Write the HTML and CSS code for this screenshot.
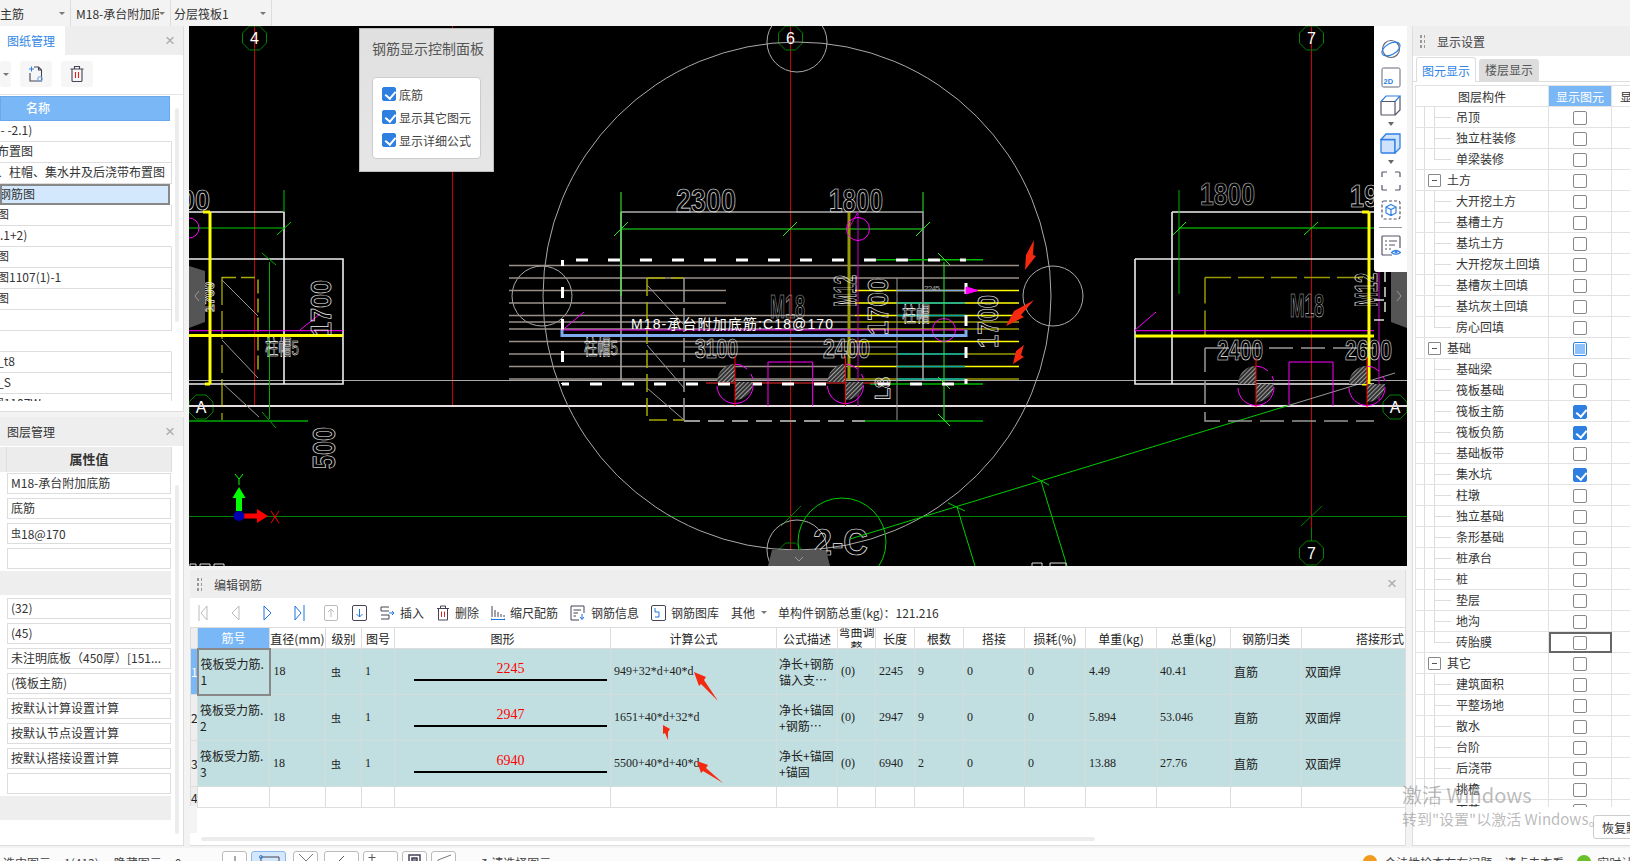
FILE: index.html
```html
<!DOCTYPE html>
<html>
  <head>
    <title>编辑钢筋</title>
    <meta charset="utf-8" />
    <link rel="stylesheet" href="styles.css">
  </head>
  <body>
    <div class="topbar">
      <div class="top-item item-a"><span class="top-text shift">主筋</span><i class="caret"></i></div>
      <div class="top-item item-b"><span class="top-text">M18-承台附加底筋</span><i class="caret"></i></div>
      <div class="top-item item-c"><span class="top-text">分层筏板1</span><i class="caret"></i></div>
    </div>

    <div class="main">
      <div class="left">
        <section class="panel drawings">
          <div class="panel-head">
            <div class="head-tab">图纸管理</div>
            <span class="close">×</span>
          </div>
          <div class="drawing-tools">
            <div class="tool-btn drop"><i class="caret"></i></div>
            <div class="tool-btn">
              <svg width="18" height="18" viewBox="0 0 18 18" fill="none" stroke="#445" stroke-width="1.1"><path d="M3 8v8h11.500V5l-3-3H7"/><path d="M11.500 2v3h3"/><path d="M4.500 1.500v5M2 4h5" stroke="#2f80e4"/><circle cx="13" cy="14" r="2.200" stroke="#7aa8dc"/></svg>
            </div>
            <div class="tool-btn">
              <svg width="16" height="18" viewBox="0 0 16 18" fill="none" stroke="#445" stroke-width="1.100"><path d="M1.500 4h13M5.500 4V1.500h5V4M3 4v11.500q0 1 1 1h8q1 0 1-1V4"/><path d="M6.500 7v6M9.500 7v6" stroke="#e02020"/></svg>
            </div>
          </div>
          <div class="sheet">
            <div class="sheet-head"><span>名称</span></div>
            <div class="sheet-row group"><span>基础层(-4.5 - -2.1)</span></div>
            <div class="sheet-row"><span>桩基础平面布置图</span></div>
            <div class="sheet-row"><span>承台、地梁、柱帽、集水井及后浇带布置图</span></div>
            <div class="sheet-row picked"><span>基础底板配钢筋图</span></div>
            <div class="sheet-row"><span>地下室墙柱图</span></div>
            <div class="sheet-row group"><span>一层结构(-2.1+2)</span></div>
            <div class="sheet-row"><span>地下室墙柱图</span></div>
            <div class="sheet-row"><span>集水坑地沟图1107(1)-1</span></div>
            <div class="sheet-row"><span>地下室墙柱图</span></div>
            <div class="sheet-row"><span></span></div>
            <div class="sheet-row group"><span></span></div>
            <div class="sheet-row"><span>基础图纸改_t8</span></div>
            <div class="sheet-row"><span>基础图纸改_S</span></div>
            <div class="sheet-row"><span>基础结构1图1107W</span></div>
            <div class="scroll-v"></div>
          </div>
        </section>

        <section class="panel props">
          <div class="panel-head">
            <div class="head-title">图层管理</div>
            <span class="close">×</span>
          </div>
          <div class="prop-head"><span></span><b>属性值</b></div>
          <div class="prop-list">
            <div class="prop">M18-承台附加底筋</div>
            <div class="prop">底筋</div>
            <div class="prop"><span class="rebar">虫</span>18@170</div>
            <div class="prop"></div>
            <div class="prop-band"></div>
            <div class="prop">(32)</div>
            <div class="prop">(45)</div>
            <div class="prop">未注明底板（450厚）[151...</div>
            <div class="prop">(筏板主筋)</div>
            <div class="prop">按默认计算设置计算</div>
            <div class="prop">按默认节点设置计算</div>
            <div class="prop">按默认搭接设置计算</div>
            <div class="prop"></div>
            <div class="prop-band"></div>
          </div>
          <div class="scroll-v"></div>
        </section>
      </div>

      <div class="center">
        <div class="canvas">
          <svg class="cad" width="1218" height="540" viewBox="189 26 1218 540">
            <defs>
              <pattern id="hatch" width="3" height="3" patternUnits="userSpaceOnUse" patternTransform="rotate(45)">
                <rect width="3" height="3" fill="#333"/>
                <line x1="0" y1="0" x2="0" y2="3" stroke="#ccc" stroke-width="1.400"/>
              </pattern>
              <g id="pile">
                <path d="M0,0L-18,0A18,18 0 0 1 0,-18Z M0,0L18,0A18,18 0 0 1 0,18Z" fill="url(#hatch)"/>
                <path d="M0,-18A18,18 0 0 1 12,-13M-18,4A18,18 0 0 0 18,3M16,-8L18,-3" fill="none" stroke="#f0f"/>
                <line x1="0" y1="-26" x2="0" y2="24" stroke="#f00"/>
              </g>
              <polygon id="octa" points="5,-12 12,-5 12,5 5,12 -5,12 -12,5 -12,-5 -5,-12" fill="none" stroke="#008000"/>
            </defs>

            <!-- axes -->
            <g stroke="#c80000" fill="none">
              <line x1="254.500" y1="26" x2="254.500" y2="405"/>
              <line x1="452.500" y1="26" x2="452.500" y2="405"/>
              <line x1="790.500" y1="26" x2="790.500" y2="550"/>
              <line x1="1311.500" y1="26" x2="1311.500" y2="528"/>
            </g>
            <line x1="1311.500" y1="528" x2="1311.500" y2="541" stroke="#008000"/>
            <use href="#octa" x="254.500" y="38"/>
            <use href="#octa" x="790.500" y="38"/>
            <use href="#octa" x="1311.500" y="38"/>
            <use href="#octa" x="1311.500" y="553"/>
            <use href="#octa" x="201" y="407"/>
            <use href="#octa" x="1395" y="407"/>
            <use href="#octa" x="790.500" y="555"/>
            <g class="label" font-size="16" text-anchor="middle">
              <text x="254.500" y="44">4</text>
              <text x="790.500" y="44">6</text>
              <text x="1311.500" y="44">7</text>
              <text x="1311.500" y="559">7</text>
              <text x="201" y="413">A</text>
              <text x="1395" y="413">A</text>
            </g>

            <!-- long horizontals -->
            <line x1="189" y1="380.500" x2="1407" y2="380.500" stroke="#aaa"/>
            <line x1="189" y1="406" x2="1407" y2="406" stroke="#e6dede" stroke-width="2"/>
            <line x1="189" y1="516.500" x2="1407" y2="516.500" stroke="#008000"/>
            <line x1="781" y1="526" x2="801" y2="506" stroke="#008000"/>
            <line x1="1301" y1="526" x2="1322" y2="506" stroke="#008000"/>

            <!-- big circle and bubbles -->
            <g fill="none" stroke="#aaa">
              <circle cx="797" cy="296" r="254"/>
              <circle cx="542" cy="296" r="30"/>
              <circle cx="1053" cy="296" r="30"/>
              <circle cx="797" cy="42" r="30"/>
              <circle cx="797" cy="550" r="30"/>
            </g>
            <circle cx="842" cy="542" r="44" fill="none" stroke="#0c0"/>
            <text class="hollow" x="813" y="555" font-size="36" textLength="55" lengthAdjust="spacingAndGlyphs">2-C</text>

            <!-- slanted green -->
            <g stroke="#0c0" fill="none">
              <line x1="850" y1="539" x2="1290" y2="405"/>
              <line x1="948" y1="503" x2="965" y2="511"/>
              <line x1="1032" y1="476" x2="1049" y2="485"/>
              <line x1="957" y1="507" x2="975" y2="566"/>
              <line x1="1041" y1="481" x2="1067" y2="566"/>
            </g>
            <line x1="1290" y1="405" x2="1395" y2="373" stroke="#999"/>
            <path d="M1032 566v-3h10v3M1050 566v-3h16v3M190 566v-2h6v2M200 566v-2h10v2M214 566v-2h10v2" stroke="#ddd" fill="none"/>

            <!-- left block -->
            <g fill="none">
              <path d="M189 212H284V384M189 259H343V384H189" stroke="#eee" stroke-width="1.600"/>
              <path d="M284 190V212" stroke="#008000" stroke-width="1.500"/>
              <path d="M189 228H284M277 235L291 222" stroke="#0c0"/>
              <path d="M269.500 262V419M262 253L276 265M262 412L276 428" stroke="#0a0"/>
              <path d="M189 421H308" stroke="#008000" stroke-width="2"/>
              <path d="M222 277.500H258V370" stroke="#aa0" stroke-width="1.500" stroke-dasharray="14 5"/>
              <path d="M222 277V420" stroke="#dd0" stroke-dasharray="28 6"/>
              <path d="M222 280L258 316M222 340L258 378M221 382L259 417" stroke="#999"/>
              <path d="M189 330.700H343" stroke="#f0f"/>
              <path d="M210 212V384M203 212H210M189 335.500H343M205 384H210" stroke="#ff0" stroke-width="3"/>
              <circle cx="189" cy="228" r="10" stroke="#f0f"/>
              <path d="M300 330L320 314" stroke="#f0f"/>
            </g>
            <text class="hollow" x="180" y="210" font-size="30" textLength="30" lengthAdjust="spacingAndGlyphs">00</text>
            <text class="hollow" transform="translate(331 336) rotate(-90)" font-size="30" textLength="56" lengthAdjust="spacingAndGlyphs">1700</text>
            <text class="hollow" transform="translate(335 469) rotate(-90)" font-size="32" textLength="42" lengthAdjust="spacingAndGlyphs">500</text>
            <text class="hollow thin" x="265" y="355" font-size="20" textLength="34" lengthAdjust="spacingAndGlyphs">柱帽5</text>
            <text class="hollow" transform="translate(214 312) rotate(-90)" font-size="14" textLength="30" lengthAdjust="spacingAndGlyphs">1700</text>

            <!-- center rows -->
            <g stroke="#9a9088" stroke-width="1.500">
              <path d="M509 265.500H1019M509 278H1019M509 290.500H726M509 303H726M509 315.500H855M509 322H855M509 329H855M509 341.500H855M509 354H855M509 366.500H855M509 379H855"/>
            </g>
            <g stroke-width="1.500">
              <path d="M855 290.500H1019M855 303H1019M855 315.500H1019M855 341.500H1019M855 366.500H1019" stroke="#ff0"/>
              <path d="M855 322H1019M855 329H1019M855 354H1019M855 379H1019" stroke="#990"/>
              <path d="M897 303H965M897 315.500H965M897 354H965M897 366.500H965M897 379H965" stroke="#0aa"/>
              <path d="M897 290.500H965" stroke="#8aa8f0"/>
            </g>

            <!-- center block -->
            <g fill="none">
              <path d="M621 212H923V380M621 212V380" stroke="#aaa" stroke-width="1.500"/>
              <path d="M621 192V296" stroke="#3f3"/>
              <path d="M923 192V212M621 229H923M614 236L628 222M783 236L797 222M916 236L930 222" stroke="#2e2"/>
              <path d="M849 212V380" stroke="#990" stroke-width="3"/>
              <path d="M858 212V406M849 228L858 212" stroke="#c0c"/>
              <circle cx="858" cy="229" r="11.500" stroke="#f0f"/>
              <circle cx="944" cy="330" r="11.500" stroke="#f0f"/>
              <path d="M565 328L584 312" stroke="#f0f"/>
              <path d="M647 278H684M647 278V420H684" stroke="#aa0" stroke-dasharray="18 6" stroke-width="1.500"/>
              <path d="M684 278V420" stroke="#999" stroke-dasharray="24 6" stroke-width="1.500"/>
              <path d="M647 285L684 325M647 345L684 388M647 388L684 420" stroke="#999"/>
              <path d="M684 347H897M897 278V420" stroke="#999"/>
              <path d="M684 421H865" stroke="#999" stroke-width="2" stroke-dasharray="16 8"/>
              <path d="M865 421H983" stroke="#008000" stroke-width="2"/>
              <path d="M876 259.700H983M870 384H983" stroke="#0b0" stroke-width="1.500"/>
              <path d="M944 262V420M938 253L950 265M938 377L950 389M938 414L950 426" stroke="#2e2"/>
              <path d="M768 406V362H812.700V406" stroke="#f0f"/>
              <path d="M706 383H880" stroke="#f33"/>
              <path d="M576 260H966" stroke="#fff" stroke-width="3" stroke-dasharray="12 20"/>
              <path d="M590 384H966" stroke="#fff" stroke-width="3" stroke-dasharray="12 20"/>
              <path d="M562 384H569" stroke="#fff" stroke-width="3"/>
              <path d="M562.500 260V266M562.500 287V384M966 283V384" stroke="#fff" stroke-width="3" stroke-dasharray="11 21"/>
              <path d="M562 330H966" stroke="#f0f"/>
              <path d="M562 330V335.500H966V330" stroke="#7fa8ee" stroke-width="3"/>
              <path d="M966 287L978 290.500L966 294Z" fill="#f0f" stroke="#f0f"/>
            </g>
            <g class="hollow">
              <text x="676" y="212" font-size="33" textLength="60" lengthAdjust="spacingAndGlyphs">2300</text>
              <text x="829" y="212" font-size="33" textLength="54" lengthAdjust="spacingAndGlyphs">1800</text>
              <text x="770" y="318" font-size="34" textLength="35" lengthAdjust="spacingAndGlyphs" class="dim">M18</text>
              <text x="695" y="358" font-size="28" textLength="43" lengthAdjust="spacingAndGlyphs">3100</text>
              <text x="823" y="358" font-size="28" textLength="47" lengthAdjust="spacingAndGlyphs">2400</text>
              <text transform="translate(856 307) rotate(-90)" font-size="32" textLength="32" lengthAdjust="spacingAndGlyphs">M12</text>
              <text transform="translate(888 335) rotate(-90)" font-size="30" textLength="57" lengthAdjust="spacingAndGlyphs">1700</text>
              <text transform="translate(998 348) rotate(-90)" font-size="30" textLength="53" lengthAdjust="spacingAndGlyphs">1700</text>
              <text transform="translate(890 400) rotate(-90)" font-size="22" textLength="23" lengthAdjust="spacingAndGlyphs">L8</text>
              <text class="thin" x="584" y="355" font-size="20" textLength="34" lengthAdjust="spacingAndGlyphs">柱帽5</text>
              <text class="thin" x="902" y="322" font-size="20" textLength="28" lengthAdjust="spacingAndGlyphs">柱帽</text>
            </g>
            <text x="924" y="291" class="tiny" font-size="8" textLength="16">2245</text>
            <text x="631" y="329" class="tag" font-size="14" textLength="202" lengthAdjust="spacing">M18-承台附加底筋:C18@170</text>

            <!-- right block -->
            <g fill="none">
              <path d="M1172 212H1374M1172 212V384M1135 259H1374M1135 259V384H1374" stroke="#eee" stroke-width="1.600"/>
              <path d="M1179 190V294" stroke="#0a0"/>
              <path d="M1179 228H1374M1173 235L1186 222M1304 235L1318 222" stroke="#0e0"/>
              <path d="M1205 277.500H1374M1205 277.500V340" stroke="#990" stroke-width="1.500" stroke-dasharray="26 7"/>
              <path d="M1205 348H1374M1205 348V421H1374" stroke="#999" stroke-width="1.500" stroke-dasharray="24 8"/>
              <path d="M1135 330.700H1374M1135 330L1156 312" stroke="#f0f"/>
              <path d="M1369 212V384M1362 212H1369M1135 336H1374M1362 384H1369" stroke="#ff0" stroke-width="3"/>
              <path d="M1379 212V400" stroke="#c0c"/>
              <path d="M1289 406V362H1333V406" stroke="#f0f"/>
              <path d="M1374 300h10M1374 320h10M1385 272v40" stroke="#ddd" stroke-width="1.500" stroke-dasharray="10 5"/>
            </g>
            <g class="hollow">
              <text x="1200" y="205" font-size="31" textLength="55" lengthAdjust="spacingAndGlyphs" class="dim">1800</text>
              <text x="1350" y="207" font-size="31" textLength="28" lengthAdjust="spacingAndGlyphs">19</text>
              <text x="1290" y="317" font-size="33" textLength="34" lengthAdjust="spacingAndGlyphs" class="dim">M18</text>
              <text x="1217" y="360" font-size="30" textLength="46" lengthAdjust="spacingAndGlyphs">2400</text>
              <text x="1345" y="360" font-size="30" textLength="47" lengthAdjust="spacingAndGlyphs">2600</text>
              <text transform="translate(1377 307) rotate(-90)" font-size="32" textLength="34" lengthAdjust="spacingAndGlyphs">M12</text>
            </g>
            <use href="#pile" x="735" y="382"/>
            <use href="#pile" x="845.500" y="382"/>
            <use href="#pile" x="1256" y="384"/>
            <use href="#pile" x="1367" y="384"/>

            <!-- red markers -->
            <g fill="#f5290f">
              <polygon points="1025,270 1026,255 1034,240 1033,255 1036,256"/>
              <polygon points="1006,326 1014,311 1034,300 1021,315 1024,317"/>
              <polygon points="1013,364 1016,351 1024,345 1021,355 1024,357"/>
            </g>

            <!-- coordinate gizmo -->
            <path d="M236 511V498H232.500L239 487L245.500 498H242V511Z" fill="#0f0"/>
            <path d="M242 513.500H257V509L268 516L257 523V518.500H242Z" fill="#f00"/>
            <ellipse cx="239" cy="516" rx="5.500" ry="5" fill="#0000b0"/>
            <path d="M235 474L239 479L243 474M239 479V485" stroke="#0f0" fill="none"/>
            <path d="M271 511L279 523M279 511L271 523" stroke="#f00" fill="none"/>

            <!-- edge handles -->
            <g fill="#555">
              <path d="M189 266L205 271V322L189 328Z"/>
              <path d="M1407 266L1391 271V322L1407 328Z"/>
              <path d="M768 566L772 550H826L830 566Z"/>
            </g>
            <g fill="none" stroke="#999">
              <path d="M199 291L195 296L199 301"/>
              <path d="M1397 291L1401 296L1397 301"/>
              <path d="M795 557L799 561L803 557"/>
            </g>
          </svg>

          <div class="rebar-control">
            <div class="control-title">钢筋显示控制面板</div>
            <div class="control-box">
              <label class="control-row"><span class="cb on big"></span>底筋</label>
              <label class="control-row"><span class="cb on big"></span>显示其它图元</label>
              <label class="control-row"><span class="cb on big"></span>显示详细公式</label>
            </div>
          </div>

          <div class="view-tools">
            <svg width="22" height="22" viewBox="0 0 22 22" fill="none" stroke-width="1.200"><circle cx="11" cy="11" r="8.500" stroke="#667"/><ellipse cx="11" cy="11" rx="10" ry="5.500" transform="rotate(-30 11 11)" stroke="#2f80e4"/></svg>
            <svg class="tool-up" width="20" height="21" viewBox="0 0 20 21" fill="none"><rect x="1" y="1" width="18" height="19" rx="1.500" stroke="#667"/><text x="2.500" y="17" class="icon-2d">2D</text></svg>
            <svg class="tool-up" width="21" height="21" viewBox="0 0 21 21" fill="none" stroke="#556" stroke-width="1.200"><path d="M1 6.500V19a1 1 0 0 0 1 1h13V6.500zM15 20l5-5V1"/><path d="M1 6.500L6 1h14l-5 5.500" stroke="#2f80e4"/></svg>
            <i class="mini-caret"></i>
            <svg class="tool-down" width="21" height="21" viewBox="0 0 21 21" stroke="#2f80e4" stroke-width="1.300"><path d="M1 6.500V19a1 1 0 0 0 1 1h13V6.500z" fill="#cfe2fb"/><path d="M1 6.500L6 1h14v14l-5 5V6.500z" fill="#cfe2fb"/></svg>
            <i class="mini-caret"></i>
            <svg class="tool-down" width="20" height="20" viewBox="0 0 20 20" fill="none" stroke="#556" stroke-width="1.200"><path d="M1 6V2q0-1 1-1h4M14 1h4q1 0 1 1v4M19 14v4q0 1-1 1h-4M6 19H2q-1 0-1-1v-4"/></svg>
            <svg width="20" height="20" viewBox="0 0 20 20" fill="none" stroke-width="1.200"><rect x="1" y="1" width="18" height="18" rx="2" stroke="#556" stroke-dasharray="3 2"/><path d="M10 4.500L15 7v6l-5 2.500L5 13V7zM5 7l5 2.500L15 7M10 9.500V15.500" stroke="#2f80e4"/></svg>
            <hr class="tool-rule" />
            <svg width="20" height="21" viewBox="0 0 20 21" fill="none" stroke="#556" stroke-width="1.200"><path d="M11 20H2q-1 0-1-1V2q0-1 1-1h16q1 0 1 1v11"/><path d="M4 6h2M8 6h8M4 10h2M8 10h6M4 14h2M8 14h2"/><path d="M10.500 17.500q4-4 9 0q-5 3.500-9 0z" stroke="#2f80e4"/><circle cx="15" cy="17.300" r="1.300" fill="#2f80e4" stroke="none"/></svg>
          </div>
        </div>

        <section class="editor">
          <div class="panel-head editor-head">
            <i class="grip"></i>
            <div class="editor-title">编辑钢筋</div>
            <span class="close">×</span>
          </div>
          <div class="editor-tools">
            <svg class="nav n1" width="10" height="18" viewBox="0 0 10 18" fill="none" stroke="#bbb"><path d="M1 1V17M9 2L3 9L9 16Z"/></svg>
            <svg class="nav n2" width="9" height="18" viewBox="0 0 9 18" fill="none" stroke="#bbb"><path d="M8 2L1 9L8 16Z"/></svg>
            <svg class="nav n3" width="9" height="18" viewBox="0 0 9 18" fill="none" stroke="#1f74e0"><path d="M1 2L8 9L1 16Z"/></svg>
            <svg class="nav n4" width="11" height="18" viewBox="0 0 11 18" fill="none" stroke="#1f74e0"><path d="M1 2L7 9L1 16ZM10 1V17"/></svg>
            <svg class="nav n5" width="14" height="16" viewBox="0 0 14 16" fill="none" stroke="#bbb"><rect x=".5" y=".5" width="13" height="15" rx="1.500"/><path d="M7 12V4M4 7L7 4L10 7"/></svg>
            <svg class="nav n6" width="15" height="16" viewBox="0 0 15 16" fill="none" stroke="#1f74e0"><rect x=".5" y=".5" width="14" height="15" rx="1.500" stroke="#445"/><path d="M7.500 4V12M4.500 9L7.500 12L10.500 9"/></svg>
            <span class="act a1"><svg width="15" height="14" viewBox="0 0 15 14" fill="none" stroke="#445"><path d="M9 1H1V5H9M1 9H9V13H1"/><path d="M9 7H14M12 5L14 7L12 9" stroke="#1f74e0"/></svg>插入</span>
            <span class="act"><svg width="14" height="16" viewBox="0 0 14 16" fill="none" stroke="#445"><path d="M1 3.500H13M4.500 3.500V1H9.500V3.500M2.500 3.500V15H11.500V3.500"/><path d="M5.500 6.500V12M8.500 6.500V12" stroke="#e02020"/></svg>删除</span>
            <span class="act"><svg width="14" height="16" viewBox="0 0 14 16" fill="none" stroke="#445"><path d="M1 1V12M4 5V12M7 7V12M10 9V12M13 10V12"/><path d="M0 14.500H14M0 13V15.500M14 13V15.500" stroke="#1f74e0"/></svg>缩尺配筋</span>
            <span class="act"><svg width="16" height="16" viewBox="0 0 16 16" fill="none" stroke="#445"><path d="M9 15H1V1H14V8"/><path d="M3.500 5H11M3.500 8H8M3.500 11H6"/><path d="M12 9V14M10 12L12 14.500L14 12" stroke="#1f74e0"/></svg>钢筋信息</span>
            <span class="act"><svg width="15" height="16" viewBox="0 0 15 16" fill="none" stroke="#445"><rect x=".5" y=".5" width="14" height="15" rx="1.500"/><path d="M4 3V7H8V12H4" stroke="#1f74e0"/></svg>钢筋图库</span>
            <span class="act other">其他<i class="caret"></i></span>
            <span class="total">单构件钢筋总重(kg)：121.216</span>
          </div>

          <table class="rebars">
            <colgroup>
              <col class="c0"><col class="c1"><col class="c2"><col class="c3"><col class="c4"><col class="c5"><col class="c6"><col class="c7"><col class="c8"><col class="c9"><col class="c10"><col class="c11"><col class="c12"><col class="c13"><col class="c14"><col class="c15"><col class="c16">
            </colgroup>
            <thead>
              <tr>
                <th class="num"></th><th class="active">筋号</th><th>直径(mm)</th><th>级别</th><th>图号</th><th>图形</th><th>计算公式</th><th>公式描述</th><th class="bend"><div class="clip-head"><span>弯曲调整</span></div></th><th>长度</th><th>根数</th><th>搭接</th><th>损耗(%)</th><th>单重(kg)</th><th>总重(kg)</th><th>钢筋归类</th><th class="to-right">搭接形式</th>
              </tr>
            </thead>
            <tbody>
              <tr class="filled">
                <td class="num now">1</td><td class="name sel">筏板受力筋.<br>1</td><td class="fig">18</td><td class="fig sym">虫</td><td class="fig">1</td>
                <td class="shape"><b>2245</b><i></i></td><td class="fig">949+32*d+40*d</td><td class="name">净长+钢筋<br>锚入支…</td><td class="fig">(0)</td><td class="fig">2245</td><td class="fig">9</td><td class="fig">0</td><td class="fig">0</td><td class="fig">4.49</td><td class="fig">40.41</td><td>直筋</td><td>双面焊</td>
              </tr>
              <tr class="filled">
                <td class="num">2</td><td class="name">筏板受力筋.<br>2</td><td class="fig">18</td><td class="fig sym">虫</td><td class="fig">1</td>
                <td class="shape"><b>2947</b><i></i></td><td class="fig">1651+40*d+32*d</td><td class="name">净长+锚固<br>+钢筋…</td><td class="fig">(0)</td><td class="fig">2947</td><td class="fig">9</td><td class="fig">0</td><td class="fig">0</td><td class="fig">5.894</td><td class="fig">53.046</td><td>直筋</td><td>双面焊</td>
              </tr>
              <tr class="filled">
                <td class="num">3</td><td class="name">筏板受力筋.<br>3</td><td class="fig">18</td><td class="fig sym">虫</td><td class="fig">1</td>
                <td class="shape"><b>6940</b><i></i></td><td class="fig">5500+40*d+40*d</td><td class="name">净长+锚固<br>+锚固</td><td class="fig">(0)</td><td class="fig">6940</td><td class="fig">2</td><td class="fig">0</td><td class="fig">0</td><td class="fig">13.88</td><td class="fig">27.76</td><td>直筋</td><td>双面焊</td>
              </tr>
              <tr class="empty">
                <td class="num">4</td><td></td><td></td><td></td><td></td><td></td><td></td><td></td><td></td><td></td><td></td><td></td><td></td><td></td><td></td><td></td><td></td>
              </tr>
            </tbody>
          </table>
          <div class="editor-gutter"></div>
          <div class="scroll-h"></div>
        </section>
      </div>

      <section class="right">
        <div class="panel-head right-head">
          <i class="grip"></i>
          <div class="editor-title">显示设置</div>
        </div>
        <div class="right-tabs">
          <div class="r-tab on">图元显示</div>
          <div class="r-tab">楼层显示</div>
        </div>
        <div class="layers-wrap">
          <table class="layers">
            <colgroup><col class="l1"><col class="l2"><col class="l3"></colgroup>
            <thead><tr><th>图层构件</th><th class="active">显示图元</th><th class="l-next">显示名称</th></tr></thead>
            <tbody>
              <tr><td class="leaf">吊顶</td><td><span class="cb"></span></td><td></td></tr>
              <tr><td class="leaf">独立柱装修</td><td><span class="cb"></span></td><td></td></tr>
              <tr><td class="leaf end">单梁装修</td><td><span class="cb"></span></td><td></td></tr>
              <tr><td class="branch"><i class="fold"></i>土方</td><td><span class="cb"></span></td><td></td></tr>
              <tr><td class="leaf">大开挖土方</td><td><span class="cb"></span></td><td></td></tr>
              <tr><td class="leaf">基槽土方</td><td><span class="cb"></span></td><td></td></tr>
              <tr><td class="leaf">基坑土方</td><td><span class="cb"></span></td><td></td></tr>
              <tr><td class="leaf">大开挖灰土回填</td><td><span class="cb"></span></td><td></td></tr>
              <tr><td class="leaf">基槽灰土回填</td><td><span class="cb"></span></td><td></td></tr>
              <tr><td class="leaf">基坑灰土回填</td><td><span class="cb"></span></td><td></td></tr>
              <tr><td class="leaf end">房心回填</td><td><span class="cb"></span></td><td></td></tr>
              <tr><td class="branch"><i class="fold"></i>基础</td><td><span class="cb part"></span></td><td></td></tr>
              <tr><td class="leaf">基础梁</td><td><span class="cb"></span></td><td></td></tr>
              <tr><td class="leaf">筏板基础</td><td><span class="cb"></span></td><td></td></tr>
              <tr><td class="leaf">筏板主筋</td><td><span class="cb on"></span></td><td></td></tr>
              <tr><td class="leaf">筏板负筋</td><td><span class="cb on"></span></td><td></td></tr>
              <tr><td class="leaf">基础板带</td><td><span class="cb"></span></td><td></td></tr>
              <tr><td class="leaf">集水坑</td><td><span class="cb on"></span></td><td></td></tr>
              <tr><td class="leaf">柱墩</td><td><span class="cb"></span></td><td></td></tr>
              <tr><td class="leaf">独立基础</td><td><span class="cb"></span></td><td></td></tr>
              <tr><td class="leaf">条形基础</td><td><span class="cb"></span></td><td></td></tr>
              <tr><td class="leaf">桩承台</td><td><span class="cb"></span></td><td></td></tr>
              <tr><td class="leaf">桩</td><td><span class="cb"></span></td><td></td></tr>
              <tr><td class="leaf">垫层</td><td><span class="cb"></span></td><td></td></tr>
              <tr><td class="leaf">地沟</td><td><span class="cb"></span></td><td></td></tr>
              <tr><td class="leaf end">砖胎膜</td><td class="focus"><span class="cb"></span></td><td></td></tr>
              <tr><td class="branch"><i class="fold"></i>其它</td><td><span class="cb"></span></td><td></td></tr>
              <tr><td class="leaf">建筑面积</td><td><span class="cb"></span></td><td></td></tr>
              <tr><td class="leaf">平整场地</td><td><span class="cb"></span></td><td></td></tr>
              <tr><td class="leaf">散水</td><td><span class="cb"></span></td><td></td></tr>
              <tr><td class="leaf">台阶</td><td><span class="cb"></span></td><td></td></tr>
              <tr><td class="leaf">后浇带</td><td><span class="cb"></span></td><td></td></tr>
              <tr><td class="leaf">挑檐</td><td><span class="cb"></span></td><td></td></tr>
              <tr><td class="leaf">雨蓬</td><td><span class="cb"></span></td><td></td></tr>
            </tbody>
          </table>
        </div>
        <div class="right-foot"><button class="reset">恢复默认设置</button></div>
      </section>
    </div>

    <div class="statusbar">
      <span class="st-text st-a">选中图元</span>
      <span class="st-text st-n">1(413)</span>
      <span class="st-text st-b">隐藏图元</span>
      <span class="st-text st-n">0</span>
      <span class="st-btns">
        <i class="st-btn w1"><svg width="22" height="10" viewBox="0 0 22 10" fill="none" stroke="#555"><path d="M11 3V10"/></svg></i>
        <i class="st-btn w2 on"><svg width="32" height="10" viewBox="0 0 32 10" fill="none" stroke="#445"><path d="M8 4H26V10M8 4V10"/><circle cx="8" cy="4" r="1.500" stroke="#2f80e4"/></svg></i>
        <i class="st-btn w1 gap-b"><svg width="22" height="10" viewBox="0 0 22 10" fill="none" stroke="#777"><path d="M4 1L11 8L18 1M8 10L11 8L14 10"/></svg></i>
        <i class="st-btn w2 gap-c"><svg width="32" height="10" viewBox="0 0 32 10" fill="none" stroke="#555"><path d="M12 9L18 3"/></svg></i>
        <i class="st-btn w2"><svg width="32" height="10" viewBox="0 0 32 10" fill="none" stroke="#555"><path d="M7 1V8M3.500 4.500H10.500"/></svg></i>
        <i class="st-btn w1"><svg width="22" height="10" viewBox="0 0 22 10" fill="none" stroke="#445" stroke-width="1.500"><rect x="5" y="2" width="11" height="12"/><rect x="8" y="5" width="5" height="5" fill="#889"/></svg></i>
        <i class="st-btn w1"><svg width="22" height="10" viewBox="0 0 22 10" fill="none" stroke="#777"><path d="M5 10V7L18 2"/></svg></i>
      </span>
      <span class="st-text st-c">↗ 请选择图元</span>
      <i class="dot orange"></i>
      <span class="st-text st-d">合法性检查存在问题，请点击查看</span>
      <i class="dot green"></i>
      <span class="st-text st-e">实时计算</span>
    </div>

    <!-- annotations drawn over the grid -->
    <svg class="arrows" width="1630" height="861" viewBox="0 0 1630 861" fill="#f5290f">
      <polygon points="694,672 706,677 704,680 718,701 701,684 699,686"/>
      <polygon points="663,725 670,729 668,732 668,740 665,733 663,734"/>
      <polygon points="697,761 708,765 706,768 723,783 703,771 701,773"/>
    </svg>

    <div class="watermark">
      <div class="wm-big">激活 Windows</div>
      <div class="wm-small">转到"设置"以激活 Windows。</div>
    </div>
  </body>
</html>
```

FILE: styles.css
```css
* {
  box-sizing: border-box;
}

html,
body {
  margin: 0;
  height: 861px;
  overflow: hidden;
}

body {
  position: relative;
  width: 1630px;
  background: #f3f3f3;
  font-family: "Noto Sans CJK SC", "Liberation Sans", sans-serif;
  font-size: 12px;
  color: #333;
}

i {
  font-style: normal;
}

.caret {
  display: inline-block;
  width: 0;
  height: 0;
  border: 3px solid transparent;
  border-top: 3px solid #777;
  border-bottom: 0;
}

/* top bar */
.topbar {
  display: flex;
  height: 26px;
  background: #f3f3f3;
}

.top-item {
  display: flex;
  align-items: center;
  justify-content: space-between;
  padding: 0 5px;
  border-right: 1px solid #ddd;
  overflow: hidden;
}

.top-text {
  white-space: nowrap;
  overflow: hidden;
  flex: 1;
}

.shift {
  margin-left: -5px;
}

.item-a {
  width: 71px;
}

.item-b {
  width: 100px;
}

.item-c {
  width: 101px;
  padding-left: 3px;
}

/* columns */
.main {
  display: flex;
  height: 822px;
}

.left {
  width: 184px;
  display: flex;
  flex-direction: column;
  gap: 5px;
}

.panel {
  position: relative;
  background: #fff;
  border-right: 1px solid #ddd;
  border-bottom: 1px solid #ddd;
}

.drawings {
  height: 386px;
  overflow: hidden;
}

.props {
  height: 429px;
}

.panel-head {
  position: relative;
  display: flex;
  align-items: center;
  height: 29px;
  background: #eeeeef;
}

.head-tab {
  width: 65px;
  height: 100%;
  padding-left: 7px;
  line-height: 29px;
  background: #fff;
  color: #2f86e6;
}

.head-title {
  padding-left: 7px;
}

.close {
  position: absolute;
  right: 8px;
  top: 50%;
  transform: translateY(-50%);
  font-family: "Liberation Sans", sans-serif;
  font-size: 17px;
  color: #aaa;
}

.drawing-tools {
  display: flex;
  gap: 9px;
  height: 40px;
  padding: 6px 0 0 0;
  border-bottom: 1px solid #e5e5e5;
}

.tool-btn {
  display: flex;
  align-items: center;
  justify-content: center;
  width: 32px;
  height: 26px;
  background: #f6f6f6;
  border-radius: 3px;
}

.tool-btn.drop {
  width: 11px;
}

.sheet {
  position: relative;
  height: 306px;
  overflow: hidden;
}

.sheet-head {
  width: 170px;
  height: 25px;
  margin-top: 1px;
  background: #7ab7f7;
  border: 1px solid #69a8ea;
  color: #fff;
  font-weight: 500;
  line-height: 22px;
}

.sheet-head span {
  margin-left: 25px;
}

.sheet-row {
  width: 172px;
  height: 21px;
  line-height: 18px;
  border-bottom: 1px solid #ddd;
  border-right: 1px solid #ddd;
  white-space: nowrap;
  overflow: hidden;
  position: relative;
}

.sheet-row.group {
  border-right-color: #fff;
}

.sheet-row span {
  margin-left: -63px;
}

.sheet-row.picked {
  width: 170px;
  background: #d4e8fd;
  border: 2px solid #888;
  line-height: 16px;
}

.scroll-v {
  position: absolute;
  right: 4px;
  top: 13px;
  width: 4px;
  height: 214px;
  background: #ececec;
  border-radius: 2px;
}

.props .scroll-v {
  top: 68px;
  height: 349px;
}

.prop-head {
  display: flex;
  height: 25px;
  margin-top: 1px;
  font-size: 13px;
}

.prop-head span {
  width: 7px;
  background: #ececec;
  border-right: 1px solid #ddd;
}

.prop-head b {
  width: 165px;
  background: #ececec;
  text-align: center;
  line-height: 24px;
  font-weight: 600;
  border-right: 1px solid #ddd;
}

.prop-list {
  display: flex;
  flex-direction: column;
  margin-top: 1px;
  gap: 4px;
  width: 171px;
}

.prop {
  height: 21px;
  margin-left: 7px;
  padding-left: 3px;
  border: 1px solid #ddd;
  line-height: 18px;
  white-space: nowrap;
  overflow: hidden;
}

.prop-band {
  height: 24px;
  margin: -2px 0 -1px;
  background: #eeeeee;
}

.rebar {
  font-size: 10px;
  vertical-align: 2px;
}

/* canvas */
.center {
  width: 1218px;
  margin-left: 5px;
  display: flex;
  flex-direction: column;
  gap: 4px;
}

.canvas {
  position: relative;
  height: 540px;
  background: #000;
  overflow: hidden;
}

.cad {
  display: block;
}

.cad text {
  font-family: "Liberation Sans", "Noto Sans CJK SC", sans-serif;
}

.label text,
.label {
  fill: #fff;
}

.hollow,
.hollow text {
  fill: none;
  stroke: #f2f2f2;
  stroke-width: 0.7;
  font-weight: 700;
}

.hollow.thin,
.hollow .thin {
  stroke-width: 0.55;
  stroke: #fff;
  font-weight: 400;
}

.hollow .dim {
  stroke: #c0c0c0;
}

.tiny {
  fill: #aaa;
}

.tag {
  fill: #fff;
}

.rebar-control {
  position: absolute;
  left: 170px;
  top: 2px;
  width: 135px;
  height: 144px;
  padding: 0 12px;
  background: linear-gradient(#e0e0e0, #e6e6e6);
  border: 1px solid #bbb;
}

.control-title {
  height: 48px;
  padding-top: 9px;
  font-size: 14px;
  line-height: 20px;
  text-align: center;
  white-space: nowrap;
  color: #555;
}

.control-box {
  display: flex;
  flex-direction: column;
  gap: 5px;
  height: 82px;
  padding: 7px 0 0 9px;
  background: #fff;
  border: 1px solid #ccc;
  border-radius: 4px;
}

.control-row {
  display: flex;
  align-items: center;
  gap: 3px;
  height: 18px;
  color: #444;
}

.cb {
  position: relative;
  display: inline-block;
  width: 14px;
  height: 14px;
  background: #fff;
  border: 1px solid #888;
  border-radius: 2px;
  vertical-align: middle;
}

.cb.on {
  background: #2e7fe0;
  border-color: #2e7fe0;
}

.cb.on::after {
  content: "";
  position: absolute;
  left: 4px;
  top: 1px;
  width: 5px;
  height: 8px;
  border: solid #fff;
  border-width: 0 2px 2px 0;
  transform: rotate(40deg);
}

.cb.part {
  border-color: #2e7fe0;
  background: #fff;
}

.cb.part::after {
  content: "";
  position: absolute;
  inset: 1px;
  background: #8ec1fb;
}

.view-tools {
  position: absolute;
  left: 1185px;
  top: 0;
  width: 33px;
  height: 246px;
  padding-top: 12px;
  display: flex;
  flex-direction: column;
  align-items: center;
  gap: 9px;
  background: #fff;
  border-radius: 0 0 0 3px;
}

.tool-up {
  margin-top: -2px;
}

.tool-down {
  margin-top: 1px;
}

.mini-caret {
  width: 0;
  height: 0;
  margin: -3px 0 -3px;
  border: 3.500px solid transparent;
  border-top: 4px solid #666;
  border-bottom: 0;
}

.tool-rule {
  width: 23px;
  margin: -2px 0;
  border: 0;
  border-top: 1px solid #999;
}

.icon-2d {
  font-family: "Liberation Sans", sans-serif;
  font-size: 7.500px;
  font-weight: 700;
  fill: #2f80e4;
}

/* rebar editor */
.editor {
  position: relative;
  width: 1216px;
  height: 276px;
  margin-left: 1px;
  background: #fff;
  border-bottom: 1px solid #ddd;
  border-right: 1px solid #ddd;
  overflow: hidden;
}

.editor-head {
  height: 28px;
}

.right-head {
  height: 30px;
}

.grip {
  width: 6px;
  height: 15px;
  margin: 0 12px 0 6px;
  background-image: radial-gradient(#999 1px, transparent 1.200px);
  background-size: 4px 5px;
}

.editor-title {
  color: #444;
}

.editor-tools {
  display: flex;
  align-items: center;
  height: 29px;
  padding-left: 8px;
  white-space: nowrap;
}

.nav {
  flex: none;
}

.n2 {
  margin-left: 23px;
}

.n3 {
  margin-left: 23px;
}

.n4 {
  margin-left: 22px;
}

.n5 {
  margin-left: 19px;
}

.n6 {
  margin-left: 14px;
}

.act {
  display: inline-flex;
  align-items: center;
  gap: 5px;
  margin-left: 12px;
}

.act.a1 {
  margin-left: 13px;
}

.other {
  gap: 6px;
}

.total {
  margin-left: 11px;
}

.rebars {
  table-layout: fixed;
  border-collapse: collapse;
  width: 1216px;
  color: #222;
}

.c0 { width: 7px; }
.c1 { width: 72px; }
.c2 { width: 56px; }
.c3 { width: 36px; }
.c4 { width: 33px; }
.c5 { width: 216px; }
.c6 { width: 166px; }
.c7 { width: 61px; }
.c8 { width: 38px; }
.c9 { width: 39px; }
.c10 { width: 49px; }
.c11 { width: 61px; }
.c12 { width: 61px; }
.c13 { width: 71px; }
.c14 { width: 74px; }
.c15 { width: 71px; }
.c16 { width: 105px; }

.rebars th {
  height: 21px;
  padding: 0;
  font-weight: 400;
  background: #fff;
  border: 1px solid #ddd;
  border-top-width: 1px;
  white-space: nowrap;
  overflow: hidden;
}

.rebars th.num {
  background: #eee;
}

.rebars th.active {
  background: #7ab7f7;
  color: #fff;
}

.rebars th.to-right {
  text-align: right;
  padding-right: 2px;
}

.rebars th.bend {
  vertical-align: top;
}

.clip-head {
  width: 36px;
  height: 20px;
  margin: 0 auto;
  overflow: hidden;
  white-space: normal;
  line-height: 15px;
  word-break: break-all;
}

.clip-head span {
  display: block;
  margin-top: -4px;
}

.rebars td {
  padding: 0 3px;
  border: 1px solid #d5dcdc;
  overflow: hidden;
  white-space: nowrap;
}

.filled td {
  height: 46px;
  background: #c1dfe1;
}

.empty td {
  height: 21px;
  border-color: #ddd;
}

.rebars td.num {
  padding: 0;
  background: #eee;
  text-align: center;
  font-size: 12px;
  border-color: #ddd;
}

.rebars td.now {
  background: #7ab7f7;
  color: #fff;
}

.rebars td.name {
  white-space: normal;
  line-height: 16px;
  padding-top: 1px;
  padding-left: 2px;
}

.rebars td.sel {
  border: 2px solid #888;
}

.fig {
  font-family: "Liberation Serif", "Noto Sans CJK SC", serif;
}

.rebars td.sym {
  padding-left: 5px;
  font-family: "Noto Sans CJK SC", sans-serif;
  font-size: 10px;
}

.rebars td.shape {
  position: relative;
  padding: 0 0 0 19px;
  text-align: center;
}

.shape b {
  display: block;
  width: 193px;
  font-family: "Liberation Serif", serif;
  font-size: 14px;
  font-weight: 400;
  line-height: 14px;
  color: #f00;
}

.shape i {
  display: block;
  width: 193px;
  height: 2px;
  margin-top: 3px;
  background: #000;
}

.editor-gutter {
  position: absolute;
  left: 0;
  top: 236px;
  width: 7px;
  height: 27px;
  background: #f4f4f4;
}

.scroll-h {
  position: absolute;
  left: 11px;
  bottom: 4px;
  width: 894px;
  height: 4px;
  background: #ececec;
  border-radius: 2px;
}

/* display settings */
.right {
  position: relative;
  width: 218px;
  margin-left: 5px;
  height: 820px;
  background: #fff;
  border-left: 1px solid #ddd;
  border-bottom: 1px solid #ddd;
  overflow: hidden;
}

.right-tabs {
  display: flex;
  align-items: flex-end;
  gap: 3px;
  height: 26px;
  padding-left: 3px;
  border-bottom: 1px solid #ddd;
}

.r-tab {
  width: 60px;
  height: 22px;
  line-height: 21px;
  text-align: center;
  background: #ddd;
  color: #555;
  border-radius: 3px 3px 0 0;
}

.r-tab.on {
  height: 25px;
  margin-bottom: -1px;
  line-height: 25px;
  background: #fff;
  color: #2f86e6;
  border: 1px solid #ddd;
  border-bottom: 0;
}

.layers-wrap {
  height: 722px;
  margin: 3px 0 0 2px;
  overflow: hidden;
}

.layers {
  table-layout: fixed;
  border-collapse: collapse;
  width: 216px;
}

.l1 { width: 133px; }
.l2 { width: 63px; }
.l3 { width: 80px; }

.layers th {
  height: 21px;
  padding: 0;
  font-weight: 400;
  font-size: 12px;
  white-space: nowrap;
  overflow: hidden;
  border: 1px solid #e2e2e2;
}

.layers th.active {
  background: #7ab7f7;
  color: #fff;
}

.layers th.l-next {
  text-align: left;
  padding-left: 8px;
}

.layers td {
  height: 21px;
  padding: 0;
  border: 1px solid #e2e2e2;
  text-align: center;
  line-height: 16px;
}

.layers td.leaf,
.layers td.branch {
  text-align: left;
  background-repeat: no-repeat;
}

.layers td.leaf {
  padding-left: 40px;
  background-image: linear-gradient(#ddd, #ddd), linear-gradient(#ddd, #ddd), linear-gradient(#ddd, #ddd);
  background-size: 1px 100%, 1px 100%, 17px 1px;
  background-position: 8px 0, 18px 0, 18px 10px;
}

.layers td.leaf.end {
  background-size: 1px 100%, 1px 11px, 17px 1px;
}

.layers td.branch {
  padding-left: 12px;
  background-image: linear-gradient(#ddd, #ddd);
  background-size: 1px 100%;
  background-position: 8px 0;
}

.fold {
  position: relative;
  display: inline-block;
  width: 13px;
  height: 13px;
  margin-right: 6px;
  background: #fff;
  border: 1px solid #888;
  border-radius: 1px;
  vertical-align: -2px;
}

.fold::after {
  content: "";
  position: absolute;
  left: 3px;
  top: 5px;
  width: 5px;
  height: 1px;
  background: #555;
}

.layers td.focus {
  outline: 2px solid #666;
  outline-offset: -2px;
}

.right-foot {
  height: 39px;
  padding: 8px 0 0 180px;
}

.reset {
  width: 90px;
  height: 24px;
  padding: 0 0 0 8px;
  text-align: left;
  font-family: inherit;
  font-size: 12px;
  color: #333;
  background: #fff;
  border: 1px solid #ccc;
  border-radius: 3px;
  white-space: nowrap;
}

/* status bar */
.statusbar {
  display: flex;
  align-items: flex-start;
  height: 13px;
  overflow: hidden;
  white-space: nowrap;
  color: #444;
  background: #fbfbfb;
}

.statusbar > * {
  flex: none;
}

.st-text {
  margin-top: 6px;
}

.st-a {
  width: 48px;
  margin-left: 3px;
}

.st-n {
  margin-left: 13px;
}

.st-b {
  margin-left: 15px;
}

.st-btns {
  display: flex;
  gap: 4px;
  margin: 3px 0 0 41px;
}

.st-btn {
  display: flex;
  justify-content: center;
  height: 22px;
  background: #fff;
  border: 1px solid #bbb;
  border-radius: 3px;
}

.st-btn svg {
  display: block;
  margin-top: 1px;
}

.st-btn.on {
  background: #d4e8fd;
  border-color: #8ab6ea;
}

.gap-b {
  margin-left: 3px;
}

.gap-c {
  margin-left: 2px;
}

.w1 {
  width: 25px;
}

.w2 {
  width: 35px;
}

.st-c {
  margin-left: 20px;
}

.dot {
  width: 14px;
  height: 14px;
  margin-top: 7px;
  border-radius: 50%;
}

.dot.orange {
  margin-left: 812px;
  background: #f09a1e;
}

.dot.green {
  margin-left: 13px;
  background: #6abf2a;
}

.st-d {
  margin-left: 7px;
}

.st-e {
  margin-left: 6px;
}

/* overlays */
.arrows {
  position: absolute;
  left: 0;
  top: 0;
  pointer-events: none;
}

.watermark {
  position: absolute;
  left: 1402px;
  top: 782px;
  color: rgba(130, 130, 130, 0.55);
  white-space: nowrap;
  pointer-events: none;
}

.wm-big {
  font-size: 20px;
  line-height: 26px;
}

.wm-small {
  margin-top: 2px;
  font-size: 15px;
  line-height: 18px;
}
```
